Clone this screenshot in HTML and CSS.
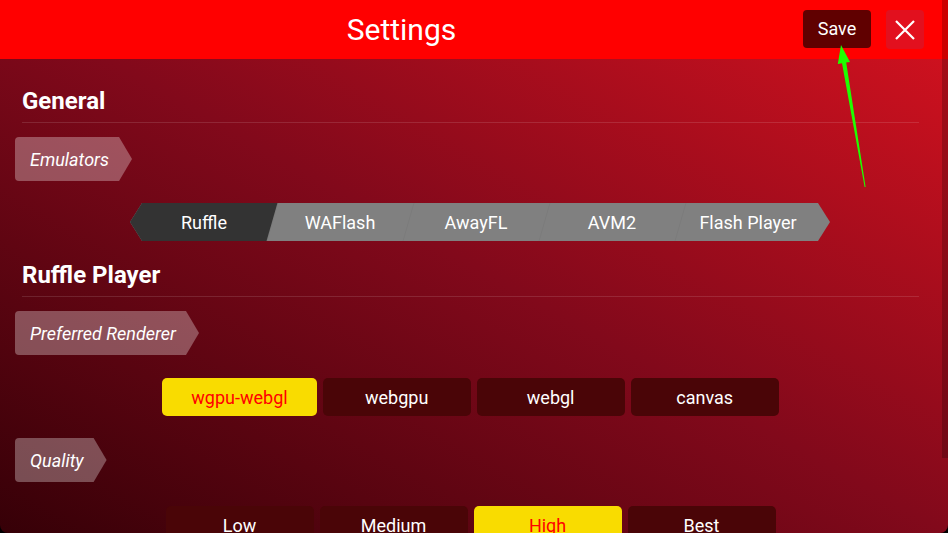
FILE: index.html
```html
<!DOCTYPE html>
<html lang="en">

<head>
    <meta charset="UTF-8">
    <meta name="viewport" content="width=device-width, initial-scale=1.0">
    <title>Settings</title>
    <link rel="stylesheet" href="styles.css">
</head>

<body>
    <div class="app">
        <header class="topbar">
            <h1 class="title">Settings</h1>
            <button type="button" class="save-btn">Save</button>
            <button type="button" class="close-btn" aria-label="Close">
                <svg width="20" height="20" viewBox="0 0 20 20">
                    <path d="M1 1 L19 19 M19 1 L1 19" stroke="#fff" stroke-width="2.2" fill="none" />
                </svg>
            </button>
        </header>

        <main class="content">
            <section class="group first">
                <h2 class="group-title">General</h2>
                <div class="tag">Emulators</div>
                <div class="switcher">
                    <span class="seg active">Ruffle</span>
                    <span class="seg">WAFlash</span>
                    <span class="seg">AwayFL</span>
                    <span class="seg">AVM2</span>
                    <span class="seg">Flash Player</span>
                </div>
            </section>

            <section class="group">
                <h2 class="group-title">Ruffle Player</h2>
                <div class="tag">Preferred Renderer</div>
                <div class="options renderer">
                    <button type="button" class="opt active">wgpu-webgl</button>
                    <button type="button" class="opt">webgpu</button>
                    <button type="button" class="opt">webgl</button>
                    <button type="button" class="opt">canvas</button>
                </div>
                <div class="tag quality-tag">Quality</div>
                <div class="options quality">
                    <button type="button" class="opt">Low</button>
                    <button type="button" class="opt">Medium</button>
                    <button type="button" class="opt active">High</button>
                    <button type="button" class="opt">Best</button>
                </div>
            </section>
        </main>

        <div class="scroll-thumb"></div>

        <!-- annotation pointing at the save button -->
        <svg class="pointer" width="948" height="533" viewBox="0 0 948 533">
            <polygon points="841,45 850,62 846.2,62.5 865.6,187 864.6,187 842,63.2 837.8,64" fill="#1eff00" />
        </svg>
    </div>
</body>

</html>
```

FILE: styles.css
```css
* {
    box-sizing: border-box;
}

html,
body {
    margin: 0;
    padding: 0;
    background: #000;
}

body {
    font-family: Roboto, 'Liberation Sans', sans-serif;
    color: #fff;
}

.app {
    position: relative;
    width: 948px;
    height: 533px;
    overflow: hidden;
    border-radius: 0 0 8px 8px;
    display: flex;
    flex-direction: column;
    background: linear-gradient(to top right, #360007 0%, #82091b 50%, #d7121f 100%);
}

/* top bar */
.topbar {
    height: 59px;
    flex: none;
    display: flex;
    align-items: center;
    padding-right: 24px;
    background: #ff0000;
}

.topbar .title {
    flex: 1;
    margin: 0;
    text-align: center;
    font-size: 30px;
    font-weight: 400;
    line-height: 34px;
}

.save-btn {
    width: 68px;
    height: 38px;
    margin-top: -2px;
    border: none;
    border-radius: 4px;
    background: #600000;
    color: #fff;
    font-family: inherit;
    font-size: 18px;
    cursor: pointer;
}

.close-btn {
    width: 38px;
    height: 39px;
    margin-left: 15px;
    border: none;
    border-radius: 4px;
    background: #e2101e;
    display: flex;
    align-items: center;
    justify-content: center;
    padding: 0;
    cursor: pointer;
}

/* content */
.content {
    flex: 1;
    padding: 0 29px 0 22px;
}

.group.first {
    padding-top: 28px;
}

.group-title {
    margin: 20px 0 0;
    padding-bottom: 7px;
    font-size: 24px;
    line-height: 28px;
    font-weight: 700;
    border-bottom: 1px solid rgba(255, 255, 255, 0.12);
}

.group.first .group-title {
    margin-top: 0;
}

.tag {
    width: fit-content;
    height: 44px;
    margin: 14px 0 0 -7px;
    padding: 0 23px 0 15px;
    display: flex;
    align-items: center;
    font-size: 18px;
    font-style: italic;
    border-radius: 4px;
    background: rgba(255, 255, 255, 0.3);
    clip-path: polygon(0 0, calc(100% - 13px) 0, 100% 50%, calc(100% - 13px) 100%, 0 100%);
}

.quality-tag {
    margin-top: 22px;
}

/* emulator switcher */
.switcher {
    width: 700px;
    height: 38px;
    margin: 22px 0 0 108px;
    padding: 0 14px 0 6px;
    display: flex;
    background: #808080;
    clip-path: polygon(12px 0, calc(100% - 12px) 0, 100% 50%, calc(100% - 12px) 100%, 12px 100%, 0 50%);
}

.seg {
    position: relative;
    z-index: 0;
    width: 136px;
    flex: none;
    display: flex;
    align-items: center;
    justify-content: center;
    font-size: 18px;
}

.seg::before {
    content: "";
    position: absolute;
    top: 0;
    bottom: 0;
    left: 0;
    right: 0;
    z-index: -1;
    transform: skewX(-16deg);
}

.seg + .seg::before {
    border-left: 1px solid rgba(0, 0, 0, 0.04);
}

.seg.active::before {
    left: -40px;
    background: #333;
}

/* option buttons */
.options {
    display: flex;
    justify-content: center;
    gap: 6px;
    margin-top: 23px;
}

.quality {
    margin-top: 24px;
}

.opt {
    min-width: 148px;
    height: 38px;
    padding: 0 29px;
    border: none;
    border-radius: 5px;
    background: #4a0507;
    color: #fff;
    font-family: inherit;
    font-size: 18px;
    cursor: pointer;
}

.opt.active {
    background: #f9dc00;
    color: #ff0000;
}

/* overlays */
.scroll-thumb {
    position: absolute;
    top: 0;
    right: 0;
    width: 6px;
    height: 458px;
    background: rgba(0, 0, 0, 0.2);
}

.pointer {
    position: absolute;
    top: 0;
    left: 0;
    pointer-events: none;
}
```
